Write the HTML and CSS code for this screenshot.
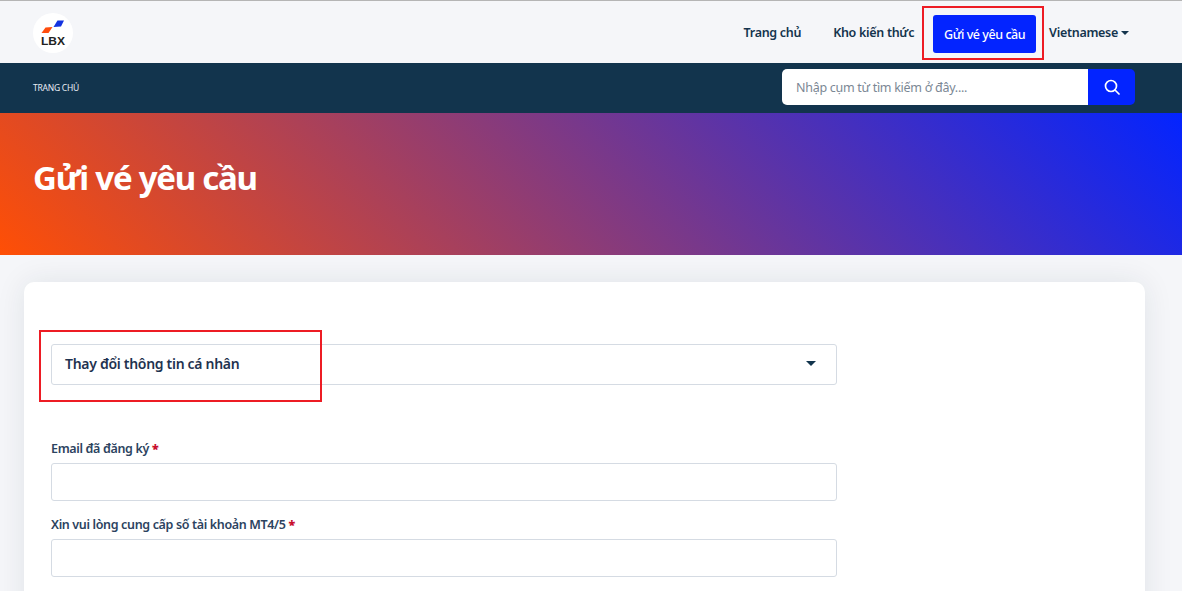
FILE: index.html
```html
<!DOCTYPE html>
<html lang="vi">
<head>
<meta charset="utf-8">
<title>Gửi vé yêu cầu</title>
<link rel="stylesheet" href="styles.css">
</head>
<body>
<div class="page">
  <header class="topbar">
    <a class="logo" href="#">
      <svg width="40" height="40" viewBox="0 0 40 40">
        <circle cx="20" cy="20" r="20" fill="#fff"/>
        <path d="M8.500 20 L12.500 14.500 L19.500 14 L15.500 20 Z" fill="#ff4d0d"/>
        <path d="M20.500 14 L24.500 7.500 L31 7.500 L28 13.500 Z" fill="#1433e0"/>
        <text class="logo-text" x="8" y="31.500" textLength="24" lengthAdjust="spacingAndGlyphs">LBX</text>
      </svg>
    </a>
    <nav class="nav">
      <a class="nav-link home" href="#">Trang chủ</a>
      <a class="nav-link kb" href="#">Kho kiến thức</a>
      <a class="nav-btn" href="#">Gửi vé yêu cầu</a>
      <a class="nav-link lang" href="#">Vietnamese<span class="caret"></span></a>
    </nav>
  </header>
  <div class="subbar">
    <span class="crumb">TRANG CHỦ</span>
    <form class="search">
      <input class="search-input" type="text" placeholder="Nhập cụm từ tìm kiếm ở đây....">
      <button class="search-btn" type="button" aria-label="Tìm kiếm">
        <svg width="16" height="16" viewBox="0 0 16 16" fill="none" stroke="#fff" stroke-width="1.700">
          <circle cx="7" cy="7" r="5.500"/>
          <path d="M11 11 L15 15" stroke-linecap="round"/>
        </svg>
      </button>
    </form>
  </div>
  <section class="hero"><h1 class="hero-title">Gửi vé yêu cầu</h1></section>
  <main class="content">
    <div class="card">
      <div class="select">
        <span>Thay đổi thông tin cá nhân</span>
        <span class="select-caret"></span>
      </div>
      <div class="field first">
        <label class="label">Email đã đăng ký <b class="req">*</b></label>
        <input class="input" type="text">
      </div>
      <div class="field">
        <label class="label">Xin vui lòng cung cấp số tài khoản MT4/5 <b class="req">*</b></label>
        <input class="input" type="text">
      </div>
    </div>
  </main>
  <div class="mark mark-btn"></div>
  <div class="mark mark-select"></div>
</div>
</body>
</html>
```
FILE: styles.css
```css
* { box-sizing: border-box; }
html, body { margin: 0; height: 591px; overflow: hidden; background: #fff; }
body { font-family: "Noto Sans", "Open Sans", sans-serif; color: #14344d; }
a { text-decoration: none; color: inherit; }
.page { position: relative; width: 1182px; height: 591px; overflow: hidden; background: #f5f6f9; border-top: 1px solid #b5b5b5; }
.topbar { height: 62px; display: flex; align-items: center; justify-content: space-between; padding: 0 53px 0 33px; background: #f5f6f9; }
.logo { display: block; width: 40px; height: 40px; margin-top: 2px; }
.logo svg { display: block; }
.logo-text { font-family: "Liberation Sans", sans-serif; font-size: 10px; font-weight: 700; fill: #222; }
.nav { display: flex; align-items: center; font-size: 12.500px; font-weight: 600; letter-spacing: -.3px; }
.nav-link { color: #14344d; white-space: nowrap; }
.nav-link.home { margin-right: 32px; }
.nav-link.kb { margin-right: 19px; }
.nav-btn { display: flex; align-items: center; justify-content: center; width: 103px; height: 38px; margin-top: 4px; margin-right: 13px; background: #0324ff; color: #fff; border-radius: 3px; font-weight: 500; letter-spacing: -.45px; white-space: nowrap; }
.caret { display: inline-block; margin-left: 3px; vertical-align: 2px; border-top: 4px solid #14344d; border-left: 4px solid transparent; border-right: 4px solid transparent; }
.subbar { height: 50px; display: flex; align-items: center; justify-content: space-between; padding: 0 47px 2px 33px; background: #12344d; }
.crumb { font-size: 8.500px; letter-spacing: -.25px; color: #e8edf5; }
.search { display: flex; width: 353px; height: 36px; }
.search-input { width: 306px; height: 36px; border: 0; outline: 0; padding: 0 14px; font: 400 12.500px "Noto Sans", sans-serif; letter-spacing: -.28px; border-radius: 5px 0 0 5px; background: #fff; }
.search-input::placeholder { color: #7b8794; opacity: 1; }
.search-btn { width: 47px; height: 36px; border: 0; padding: 0; display: flex; align-items: center; justify-content: center; background: #0324ff; border-radius: 0 5px 5px 0; }
.hero { height: 142px; display: flex; align-items: center; padding: 0 33px 12px; background: linear-gradient(45deg, #ff4f05 0%, #0324ff 100%); }
.hero-title { margin: 0; color: #fff; font-size: 33px; font-weight: 700; line-height: 1.2; letter-spacing: -1.25px; }
.content { padding: 27px 37px 0 24px; }
.card { height: 400px; padding: 62px 308px 0 27px; background: #fff; border-radius: 10px; box-shadow: 0 0 30px rgba(20, 40, 60, .09); }
.select { height: 41px; display: flex; align-items: center; justify-content: space-between; padding: 0 20px 2px 13px; border: 1px solid #d5dbe3; border-radius: 3px; font-size: 14px; font-weight: 600; letter-spacing: -.3px; color: #1f3350; }
.select-caret { border-top: 5px solid #12344d; border-left: 5px solid transparent; border-right: 5px solid transparent; }
.field { margin-top: 14px; }
.field.first { margin-top: 54px; }
.label { display: block; height: 24px; font-size: 12.500px; font-weight: 600; letter-spacing: -.35px; color: #2c4360; line-height: 19px; }
.req { color: #c8102e; }
.input { display: block; width: 100%; height: 38px; border: 1px solid #d5dbe3; border-radius: 3px; outline: 0; background: #fff; }
.mark { position: absolute; border: 2px solid #ed1c24; pointer-events: none; }
.mark-btn { left: 922px; top: 5px; width: 122px; height: 54px; }
.mark-select { left: 39px; top: 329px; width: 283px; height: 72px; }
```
